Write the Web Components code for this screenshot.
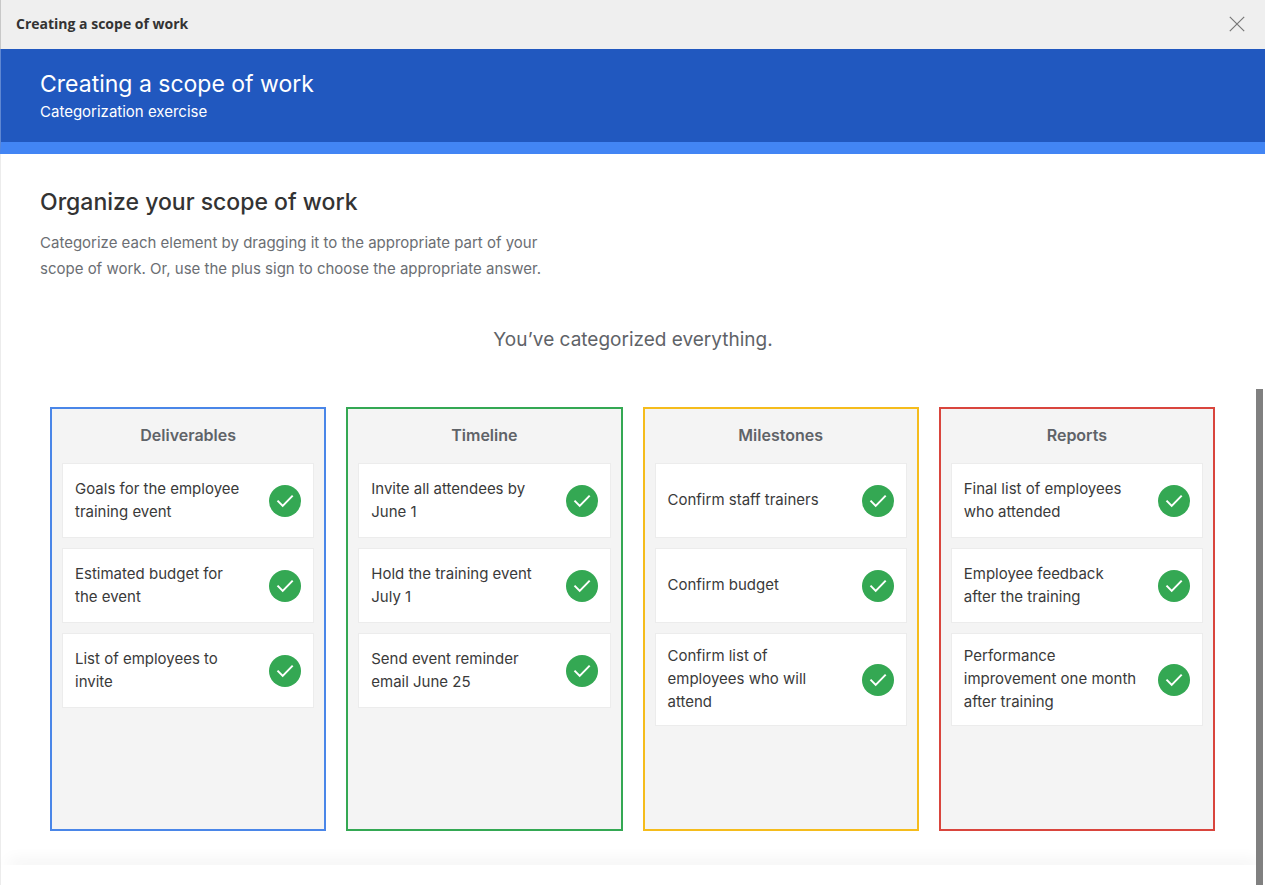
<!DOCTYPE html>
<html lang="en">
<head>
<meta charset="utf-8">
<title>Creating a scope of work</title>
<style>
  html, body { margin: 0; }
  body { background: #fff; font-family: Inter, "Open Sans", sans-serif; }
</style>
</head>
<body>
<exercise-window>
  <window-bar slot="bar">Creating a scope of work</window-bar>
  <lesson-banner slot="banner">Creating a scope of work<span slot="subtitle">Categorization exercise</span></lesson-banner>
  <exercise-intro slot="intro">Organize your scope of work<span slot="text">Categorize each element by dragging it to the appropriate part of your scope of work. Or, use the plus sign to choose the appropriate answer.</span></exercise-intro>
  <span slot="status">You’ve categorized everything.</span>
  <category-column style="--accent: #4a86e8" label="Deliverables">
    <answer-card>Goals for the employee training event</answer-card>
    <answer-card>Estimated budget for the event</answer-card>
    <answer-card>List of employees to invite</answer-card>
  </category-column>
  <category-column style="--accent: #34a853" label="Timeline">
    <answer-card>Invite all attendees by June 1</answer-card>
    <answer-card>Hold the training event July 1</answer-card>
    <answer-card>Send event reminder email June 25</answer-card>
  </category-column>
  <category-column style="--accent: #f5bc1c" label="Milestones">
    <answer-card>Confirm staff trainers</answer-card>
    <answer-card>Confirm budget</answer-card>
    <answer-card>Confirm list of employees who will attend</answer-card>
  </category-column>
  <category-column style="--accent: #d9453d" label="Reports">
    <answer-card>Final list of employees who attended</answer-card>
    <answer-card>Employee feedback after the training</answer-card>
    <answer-card>Performance improvement one month after training</answer-card>
  </category-column>
</exercise-window>

<script>
function define(name, html) {
  const template = document.createElement('template');
  template.innerHTML = html;
  customElements.define(name, class extends HTMLElement {
    connectedCallback() {
      if (this.shadowRoot) return;
      const root = this.attachShadow({ mode: 'open' });
      root.append(template.content.cloneNode(true));
      const label = root.querySelector('[data-label]');
      if (label) label.textContent = this.getAttribute('label');
    }
  });
}

define('exercise-window', `
  <style>
    :host { display: flex; flex-direction: column; position: relative; box-sizing: border-box;
            min-height: 100vh; border-left: 1px solid #ececec; }
    main { flex: 1; }
    .status { margin: 0; padding: 42px 0 51px; text-align: center; font-size: 19px; line-height: 32px; color: #5f6368; }
    .columns { display: grid; grid-template-columns: repeat(4, minmax(0, 1fr)); gap: 20px;
               min-height: 424px; padding: 0 50px 34px 49px; }
    footer { height: 20px; background: #fff; box-shadow: 0 -10px 16px -8px rgba(0, 0, 0, .14); }
    .scroll { position: absolute; top: 44%; right: 2px; bottom: 0; width: 7px; background: #808080; }
  </style>
  <slot name="bar"></slot>
  <slot name="banner"></slot>
  <main>
    <slot name="intro"></slot>
    <p class="status"><slot name="status"></slot></p>
    <div class="columns"><slot></slot></div>
  </main>
  <footer></footer>
  <div class="scroll"></div>`);

define('window-bar', `
  <style>
    :host { display: flex; align-items: center; justify-content: space-between; height: 49px;
            margin-left: -1px; padding: 0 20px 1px 15px; background: #efefef; border-left: 1px solid #c8c8c8;
            box-sizing: border-box; font: 700 14px/20px "Open Sans", sans-serif; color: #333; }
    button { display: flex; margin: 0; padding: 0; border: 0; background: none; color: #777; cursor: pointer; }
  </style>
  <slot></slot>
  <button type="button" aria-label="Close">
    <svg width="16" height="16" viewBox="0 0 16 16" fill="none" stroke="currentColor" stroke-width="1.2"><path d="M.8 .8 15.2 15.2M15.2 .8 .8 15.2"/></svg>
  </button>`);

define('lesson-banner', `
  <style>
    :host { display: block; margin-left: -1px; padding: 19px 39px 18px; background: #2158bf;
            border-left: 1px solid #5f87d2; border-bottom: 12px solid #4285f4; color: #fff; }
    h1 { margin: 0; font-size: 23px; font-weight: 400; line-height: 32px; }
    p { margin: 0; font-size: 15px; line-height: 24px; }
  </style>
  <h1><slot></slot></h1>
  <p><slot name="subtitle"></slot></p>`);

define('exercise-intro', `
  <style>
    :host { display: block; padding: 32px 39px 0; }
    h2 { margin: 0; font-size: 23px; font-weight: 500; line-height: 32px; color: #333; }
    p { max-width: 520px; margin: 12px 0 0; font-size: 15px; line-height: 26px; color: #6b6e73; }
  </style>
  <h2><slot></slot></h2>
  <p><slot name="text"></slot></p>`);

define('category-column', `
  <style>
    :host { display: block; box-sizing: border-box; border: 2px solid var(--accent); background: #f4f4f4; padding: 10px; }
    h3 { margin: 0; padding: 4px 0 16px; text-align: center; font-size: 16px; font-weight: 600; line-height: 24px; color: #5f6368; }
    .cards { display: flex; flex-direction: column; gap: 10px; }
  </style>
  <h3 data-label></h3>
  <div class="cards"><slot></slot></div>`);

define('answer-card', `
  <style>
    :host { display: flex; align-items: center; gap: 20px; box-sizing: border-box; min-height: 75px;
            padding: 10px 12px; border: 1px solid #ececec; background: #fff; color: #3a3a3a; }
    p { flex: 1; min-width: 0; margin: 0 0 2px; font-size: 15px; line-height: 23px; }
    svg { flex: none; }
  </style>
  <p><slot></slot></p>
  <svg width="32" height="32" viewBox="0 0 32 32" role="img" aria-label="Correct">
    <circle cx="16" cy="16" r="16" fill="#34a853"/>
    <path d="M8.5 15.6 13.7 20.9 23.7 10.6" fill="none" stroke="#fff" stroke-width="2"/>
  </svg>`);
</script>
</body>
</html>
